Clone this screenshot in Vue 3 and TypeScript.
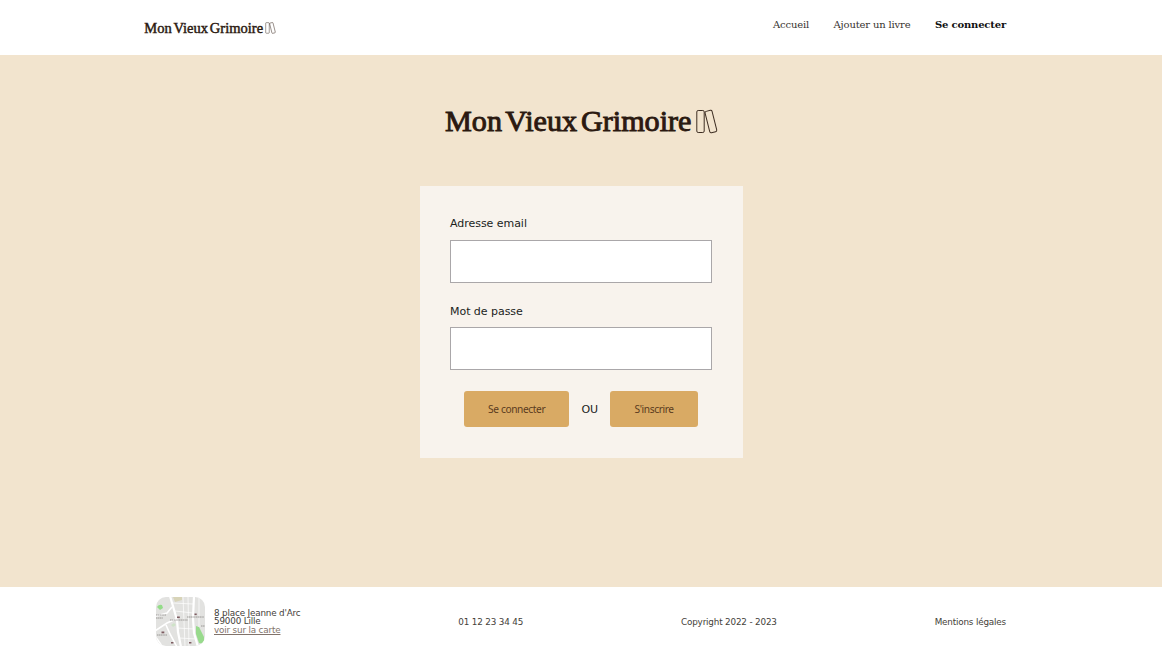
<script setup lang="ts">
import { ref } from 'vue'

const email = ref('')
const password = ref('')
</script>

<template>
  <div class="page">
    <header class="header">
      <svg class="logo-small" viewBox="0 0 274 32" role="img">
        <text class="brand" x="0.5" y="26" textLength="247" lengthAdjust="spacingAndGlyphs">Mon Vieux Grimoire</text>
        <g class="books">
          <rect x="252.8" y="5.5" width="7.4" height="22" rx="1.4" />
          <rect x="263.3" y="5.5" width="7.2" height="22" rx="1.4" transform="rotate(-14 267 16.5)" />
        </g>
      </svg>
      <nav class="nav">
        <a>Accueil</a>
        <a>Ajouter un livre</a>
        <a class="active">Se connecter</a>
      </nav>
    </header>

    <main class="main">
      <svg class="logo-large" viewBox="0 0 274 32" role="img">
        <text class="brand" x="1" y="26.2" textLength="246.5" lengthAdjust="spacingAndGlyphs">Mon Vieux Grimoire</text>
        <g class="books">
          <rect x="252.8" y="5.5" width="7.4" height="22" rx="1.4" />
          <rect x="263.3" y="5.5" width="7.2" height="22" rx="1.4" transform="rotate(-14 267 16.5)" />
        </g>
      </svg>
      <form class="card" @submit.prevent>
        <label class="field">
          <span>Adresse email</span>
          <input v-model="email" type="text" />
        </label>
        <label class="field second">
          <span>Mot de passe</span>
          <input v-model="password" type="password" />
        </label>
        <div class="actions">
          <button class="login" type="submit">Se connecter</button>
          <span>OU</span>
          <button class="signup" type="button">S'inscrire</button>
        </div>
      </form>
    </main>

    <footer class="footer">
      <div class="address">
        <svg class="map" viewBox="0 0 49 49">
          <rect width="49" height="49" fill="#e2e2e0" />
          <path d="M17 0h9v3l-7 2z" fill="#d8d4b8" />
          <path d="M1 10q2-3 5-2l1 3-3 2z" fill="#93dc88" />
          <path d="M15 28l3-2 2 2-3 2z" fill="#cfe3c8" />
          <path d="M40 29l3 1 5 10v7l-5-1-3-9z" fill="#98da8c" />
          <g fill="none" stroke="#fff">
            <path d="M14-1l7 24 1 12 3 15M38-1l-1 22 1 15 4 14" stroke-width="2.2" />
            <path d="M-1 34l12-8 9-4M10 28l4 9 7 13M-1 39l7 10M0 4l5-5M0 19l11-3 5-6" stroke-width="1.6" />
            <path d="M17 6l20 1M19 14l18 2M21 31l17 1M23 41l18 1M27 0l2 49M32 0l1 49M43 0v30" stroke-width=".7" />
          </g>
          <g fill="none" stroke="#898583" stroke-width=".8" stroke-dasharray="1.4 .4">
            <path d="M0 18h10M0 21h7M14 23h18M31 20h17M1 38h10M45 29h4" />
          </g>
          <g fill="#7d5b60">
            <rect x="21" y="19.5" width="2.8" height="1.6" />
            <rect x="38.5" y="16.5" width="2.2" height="1.6" />
            <rect x="5.5" y="34.5" width="2.8" height="1.8" />
            <rect x="15" y="45" width="2.4" height="1.5" />
            <rect x="33" y="45" width="2.4" height="1.5" />
          </g>
        </svg>
        <div class="lines">
          <div>8 place Jeanne d'Arc</div>
          <div>59000 Lille</div>
          <a>voir sur la carte</a>
        </div>
      </div>
      <span>01 12 23 34 45</span>
      <span>Copyright 2022 - 2023</span>
      <span>Mentions légales</span>
    </footer>
  </div>
</template>

<style>
body {
  margin: 0;
}
</style>

<style scoped>
.page {
  box-sizing: border-box;
  display: flex;
  flex-direction: column;
  height: 656px;
  overflow: hidden;
  background: #fff;
  font-family: "DejaVu Sans", sans-serif;
}
.header {
  box-sizing: border-box;
  display: flex;
  justify-content: space-between;
  align-items: flex-start;
  height: 55px;
  padding: 0 156px 0 144px;
}
.brand {
  font-family: "Liberation Serif", serif;
  font-size: 28.5px;
  word-spacing: -3.5px;
  fill: #2b1910;
  stroke: #2b1910;
  stroke-width: 0.9px;
}
.books {
  fill: none;
  stroke: #3d2d22;
  stroke-width: 1;
}
.logo-small {
  width: 132px;
  height: 15.4px;
  margin-top: 20px;
}
.logo-large {
  flex: none;
  width: 274px;
  height: 32px;
  margin-top: 50px;
}
.nav {
  display: flex;
  gap: 24.5px;
  padding-top: 18px;
  font-family: "DejaVu Serif", serif;
  font-size: 10px;
  letter-spacing: -0.16px;
  line-height: 13px;
  color: #373330;
}
.active {
  font-weight: 700;
  letter-spacing: -0.17px;
  color: #111;
}
.main {
  display: flex;
  flex-direction: column;
  align-items: center;
  height: 532px;
  background: #f2e4ce;
}
.card {
  box-sizing: border-box;
  width: 323px;
  height: 272px;
  margin-top: 49px;
  padding: 31px 30.5px 0;
  background: #f8f3ed;
  font-size: 11px;
  letter-spacing: -0.04px;
  color: #211e1c;
}
.field {
  display: flex;
  flex-direction: column;
  height: 87px;
}
.field span {
  height: 23px;
  line-height: 14px;
}
.field.second {
  height: 88px;
}
.field.second span {
  height: 22px;
  padding-top: 1px;
}
.field input {
  box-sizing: border-box;
  width: 262px;
  height: 43px;
  padding: 0 6px;
  border: 1px solid #aaa7a9;
  border-radius: 0;
  background: #fff;
  outline: none;
}
.actions {
  display: flex;
  align-items: center;
  justify-content: center;
  gap: 12px;
  height: 36px;
  margin-top: -1px;
}
.actions span {
  padding-top: 1px;
}
.actions button {
  height: 36px;
  padding: 0;
  border: 0;
  border-radius: 3px;
  background: #d9aa64;
  font-family: "Noto Sans", sans-serif;
  font-size: 10.2px;
  letter-spacing: -0.4px;
  color: #5a3b20;
}
.actions .login {
  width: 105.5px;
}
.actions .signup {
  width: 88px;
}
.footer {
  box-sizing: border-box;
  display: flex;
  align-items: center;
  justify-content: space-between;
  height: 69px;
  padding: 0 156px;
  font-size: 8.8px;
  letter-spacing: -0.17px;
  color: #443e39;
}
.address {
  display: flex;
  align-items: center;
  gap: 9px;
}
.map {
  width: 49px;
  height: 49px;
  border-radius: 10px;
}
.lines {
  line-height: 8.5px;
}
.lines a {
  display: block;
  color: #81736b;
  text-decoration: underline;
}
</style>
